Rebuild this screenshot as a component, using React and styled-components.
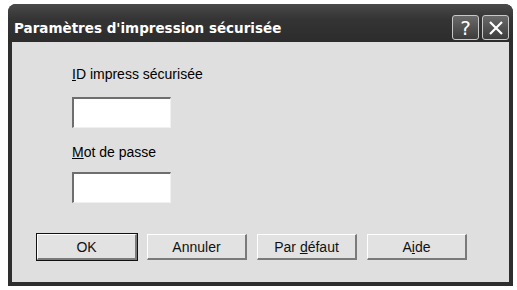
import React from 'react';
import styled, { createGlobalStyle } from 'styled-components';

const GlobalStyle = createGlobalStyle`
  body {
    margin: 0;
    background: #ffffff;
    font-family: "Liberation Sans", Arial, sans-serif;
  }
`;

const Window = styled.div`
  margin: 4px 0 0 8px;
  width: 505px;
  height: 282px;
  display: flex;
  flex-direction: column;
  background: #2e2e2e;
  border-radius: 8px 8px 0 0;
  box-sizing: border-box;
  padding: 0 4px 4px 4px;
`;

const TitleBar = styled.div`
  height: 38px;
  display: flex;
  align-items: center;
  justify-content: space-between;
  background: linear-gradient(#4a4a4a, #343434 40%, #2c2c2c);
  margin: 0 -4px;
  padding: 0 4px 0 6px;
  border-radius: 8px 8px 0 0;
`;

const Title = styled.span`
  color: #ffffff;
  font-family: "DejaVu Sans", sans-serif;
  font-weight: bold;
  font-size: 13.5px;
  margin-top: 9px;
`;

const TitleButtons = styled.div`
  display: flex;
  gap: 3px;
  margin-top: 9px;
`;

const CaptionButton = styled.div`
  width: 27px;
  height: 25px;
  box-sizing: border-box;
  border: 1px solid #c8c8c8;
  border-radius: 3px;
  background: linear-gradient(#6a6a6a, #3c3c3c);
  color: #ffffff;
  font-family: "DejaVu Sans", sans-serif;
  font-size: 20px;
  display: flex;
  align-items: center;
  justify-content: center;
`;

const Content = styled.div`
  flex: 1;
  background: #dfdfdf;
  display: flex;
  flex-direction: column;
  padding: 24px 0 0 25px;
`;

const Fields = styled.div`
  display: flex;
  flex-direction: column;
  padding-left: 35px;
`;

const Label = styled.label`
  font-size: 14px;
  color: #000;
  line-height: 16px;
  margin-bottom: ${p => p.$gap}px;
`;

const Input = styled.div`
  width: 99px;
  height: 31px;
  box-sizing: border-box;
  background: #ffffff;
  border-top: 2px solid #6e6e6e;
  border-left: 2px solid #6e6e6e;
  border-right: 1px solid #f0f0f0;
  border-bottom: 1px solid #f0f0f0;
  margin-bottom: ${p => p.$gap}px;
`;

const ButtonRow = styled.div`
  display: flex;
  gap: 10px;
`;

const Button = styled.div`
  width: 100px;
  height: 26px;
  box-sizing: border-box;
  background: #e2e2e2;
  border-top: 1px solid #ffffff;
  border-left: 1px solid #ffffff;
  border-right: 2px solid #7a7a7a;
  border-bottom: 2px solid #7a7a7a;
  outline: ${p => (p.$default ? '1px solid #111' : 'none')};
  font-size: 14px;
  color: #111;
  display: flex;
  align-items: center;
  justify-content: center;
`;

export default function App() {
  return (
    <>
      <GlobalStyle />
      <Window>
        <TitleBar>
          <Title>Paramètres d'impression sécurisée</Title>
          <TitleButtons>
            <CaptionButton>?</CaptionButton>
            <CaptionButton>
              <svg width="16" height="16" viewBox="0 0 16 16">
                <path d="M2 2 L14 14 M14 2 L2 14" stroke="#fff" strokeWidth="2.2" />
              </svg>
            </CaptionButton>
          </TitleButtons>
        </TitleBar>
        <Content>
          <Fields>
            <Label $gap={15}><span><u>I</u>D impress sécurisée</span></Label>
            <Input $gap={16} />
            <Label $gap={12}><span><u>M</u>ot de passe</span></Label>
            <Input $gap={31} />
          </Fields>
          <ButtonRow>
            <Button $default>OK</Button>
            <Button>Annuler</Button>
            <Button><span>Par <u>d</u>éfaut</span></Button>
            <Button><span>A<u>i</u>de</span></Button>
          </ButtonRow>
        </Content>
      </Window>
    </>
  );
}
